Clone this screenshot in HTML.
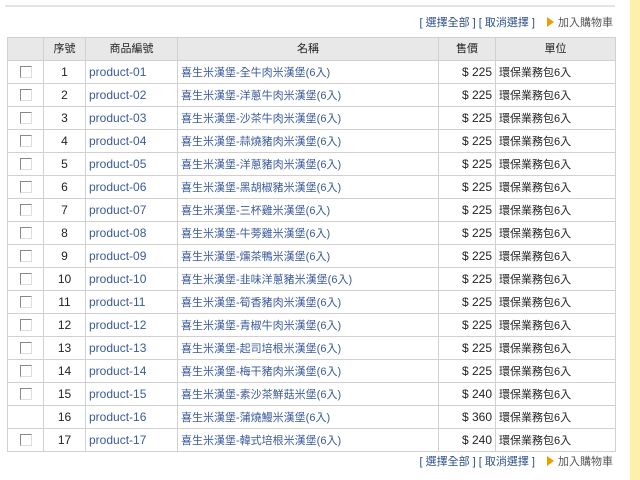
<!DOCTYPE html>
<html><head><meta charset="utf-8"><style>
body{margin:0;width:640px;height:480px;background:#fff;position:relative;overflow:hidden;font-family:"Liberation Sans","Noto Sans CJK TC",sans-serif;font-size:12px;color:#333}
.strip{position:absolute;left:630px;top:0;width:10px;height:480px;background:#fdf0a8}
.hr{position:absolute;left:5px;top:5px;width:610px;height:2px;background:#e4e4e4}
.links{position:absolute;right:27px;font-size:11px;color:#555;line-height:14px}
.links a{color:#2a4e8a;text-decoration:none}
.tri{display:inline-block;width:0;height:0;border-left:7px solid #e8a000;border-top:5px solid transparent;border-bottom:5px solid transparent;margin:0 4px 0 12px;vertical-align:-1px}
table{position:absolute;left:7px;top:37px;border-collapse:collapse;width:609px}
td,th{border:1px solid #d0d0d0;height:22px;padding:0 3px;white-space:nowrap;line-height:22px;vertical-align:top}
th{background:#e8e8e8;font-weight:normal;color:#222;font-size:11px}
td{color:#222}
td.k{font-size:11px;padding-top:2px;height:20px;line-height:20px}
.c{text-align:center}.r{text-align:right}
td.b{color:#3a5a9c}
.cb{display:inline-block;width:10px;height:10px;border:1px solid #888;border-right-color:#ddd;border-bottom-color:#ddd;background:#fff;vertical-align:-2px}
</style></head><body>
<div class="strip"></div><div class="hr"></div>
<div class="links" style="top:16px"><a>[ 選擇全部 ]</a> <a>[ 取消選擇 ]</a><span class="tri"></span><a style="color:#555">加入購物車</a></div>
<table>
<tr><th style="width:29px"></th><th style="width:35px">序號</th><th style="width:85px">商品編號</th><th style="width:254px">名稱</th><th style="width:50px">售價</th><th>單位</th></tr>
<tr><td class="c"><span class="cb"></span></td><td class="c">1</td><td class="b">product-01</td><td class="b k">喜生米漢堡-全牛肉米漢堡(6入)</td><td class="r">$ 225</td><td class="k">環保業務包6入</td></tr>
<tr><td class="c"><span class="cb"></span></td><td class="c">2</td><td class="b">product-02</td><td class="b k">喜生米漢堡-洋蔥牛肉米漢堡(6入)</td><td class="r">$ 225</td><td class="k">環保業務包6入</td></tr>
<tr><td class="c"><span class="cb"></span></td><td class="c">3</td><td class="b">product-03</td><td class="b k">喜生米漢堡-沙茶牛肉米漢堡(6入)</td><td class="r">$ 225</td><td class="k">環保業務包6入</td></tr>
<tr><td class="c"><span class="cb"></span></td><td class="c">4</td><td class="b">product-04</td><td class="b k">喜生米漢堡-蒜燒豬肉米漢堡(6入)</td><td class="r">$ 225</td><td class="k">環保業務包6入</td></tr>
<tr><td class="c"><span class="cb"></span></td><td class="c">5</td><td class="b">product-05</td><td class="b k">喜生米漢堡-洋蔥豬肉米漢堡(6入)</td><td class="r">$ 225</td><td class="k">環保業務包6入</td></tr>
<tr><td class="c"><span class="cb"></span></td><td class="c">6</td><td class="b">product-06</td><td class="b k">喜生米漢堡-黑胡椒豬米漢堡(6入)</td><td class="r">$ 225</td><td class="k">環保業務包6入</td></tr>
<tr><td class="c"><span class="cb"></span></td><td class="c">7</td><td class="b">product-07</td><td class="b k">喜生米漢堡-三杯雞米漢堡(6入)</td><td class="r">$ 225</td><td class="k">環保業務包6入</td></tr>
<tr><td class="c"><span class="cb"></span></td><td class="c">8</td><td class="b">product-08</td><td class="b k">喜生米漢堡-牛蒡雞米漢堡(6入)</td><td class="r">$ 225</td><td class="k">環保業務包6入</td></tr>
<tr><td class="c"><span class="cb"></span></td><td class="c">9</td><td class="b">product-09</td><td class="b k">喜生米漢堡-燻茶鴨米漢堡(6入)</td><td class="r">$ 225</td><td class="k">環保業務包6入</td></tr>
<tr><td class="c"><span class="cb"></span></td><td class="c">10</td><td class="b">product-10</td><td class="b k">喜生米漢堡-韭味洋蔥豬米漢堡(6入)</td><td class="r">$ 225</td><td class="k">環保業務包6入</td></tr>
<tr><td class="c"><span class="cb"></span></td><td class="c">11</td><td class="b">product-11</td><td class="b k">喜生米漢堡-筍香豬肉米漢堡(6入)</td><td class="r">$ 225</td><td class="k">環保業務包6入</td></tr>
<tr><td class="c"><span class="cb"></span></td><td class="c">12</td><td class="b">product-12</td><td class="b k">喜生米漢堡-青椒牛肉米漢堡(6入)</td><td class="r">$ 225</td><td class="k">環保業務包6入</td></tr>
<tr><td class="c"><span class="cb"></span></td><td class="c">13</td><td class="b">product-13</td><td class="b k">喜生米漢堡-起司培根米漢堡(6入)</td><td class="r">$ 225</td><td class="k">環保業務包6入</td></tr>
<tr><td class="c"><span class="cb"></span></td><td class="c">14</td><td class="b">product-14</td><td class="b k">喜生米漢堡-梅干豬肉米漢堡(6入)</td><td class="r">$ 225</td><td class="k">環保業務包6入</td></tr>
<tr><td class="c"><span class="cb"></span></td><td class="c">15</td><td class="b">product-15</td><td class="b k">喜生米漢堡-素沙茶鮮菇米堡(6入)</td><td class="r">$ 240</td><td class="k">環保業務包6入</td></tr>
<tr><td class="c"></td><td class="c">16</td><td class="b">product-16</td><td class="b k">喜生米漢堡-蒲燒鰻米漢堡(6入)</td><td class="r">$ 360</td><td class="k">環保業務包6入</td></tr>
<tr><td class="c"><span class="cb"></span></td><td class="c">17</td><td class="b">product-17</td><td class="b k">喜生米漢堡-韓式培根米漢堡(6入)</td><td class="r">$ 240</td><td class="k">環保業務包6入</td></tr>
</table>
<div class="links" style="top:455px"><a>[ 選擇全部 ]</a> <a>[ 取消選擇 ]</a><span class="tri"></span><a style="color:#555">加入購物車</a></div>
</body></html>
